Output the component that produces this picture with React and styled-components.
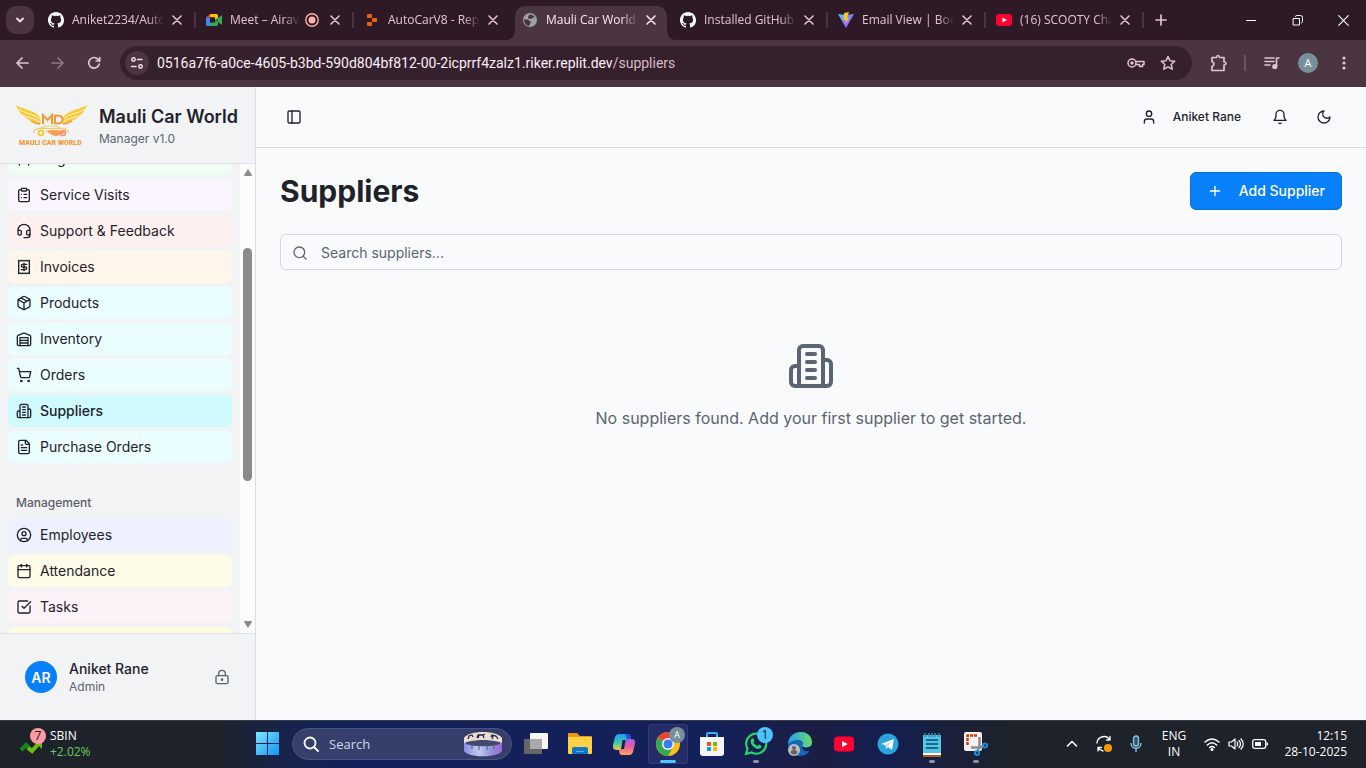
import React, { useLayoutEffect, useRef } from 'react';
import styled, { createGlobalStyle, css } from 'styled-components';
import {
  Calendar, CircleUser, ClipboardList, Headset, LockKeyhole, PanelLeft, Plus, Receipt, Search, ShoppingCart, User,
} from 'lucide-react';

const ui = '"Inter", "Liberation Sans", sans-serif';
const system = '"Open Sans", "Noto Sans", sans-serif';

const Global = createGlobalStyle`
  *, *::before, *::after { box-sizing: border-box; }
  body { margin: 0; font-family: ${ui}; color: #1e232b; }
  button, input { font: inherit; color: inherit; }
  button { border: 0; padding: 0; background: none; cursor: pointer; }
  a { color: inherit; text-decoration: none; }
  h1, h2, p { margin: 0; }
  svg { display: block; flex: none; }
`;

const Screen = styled.div`
  display: flex;
  flex-direction: column;
  height: 100vh;
  overflow: hidden;
`;

/* ---------- browser frame ---------- */

const TabStrip = styled.div`
  display: flex;
  align-items: center;
  height: 40px;
  flex: none;
  padding-left: 6px;
  background: #2d1a26;
  color: #e3c3d3;
  font: 12px/16px ${system};
`;

const TabMenuButton = styled.button`
  display: grid;
  place-items: center;
  width: 28px;
  height: 28px;
  flex: none;
  margin-right: 4px;
  border-radius: 10px;
  background: #4b3541;
  color: #f1dfe8;
`;

const Tab = styled.div`
  position: relative;
  display: flex;
  align-items: center;
  flex: 0 1 158px;
  min-width: 0;
  height: 34px;
  align-self: flex-end;
  padding: 0 11px 6px 10px;
  gap: 8px;
  ${(p) => p.$divider && css`
    &::after {
      content: '';
      position: absolute;
      right: 0;
      top: 6px;
      width: 2px;
      height: 16px;
      background: #4b3541;
    }
  `}
  ${(p) => p.$active && css`
    color: #f8e9f1;
    &::before {
      content: '';
      position: absolute;
      z-index: 0;
      inset: 0 3px;
      border-radius: 10px 10px 0 0;
      background: #4b3541;
    }
  `}
`;

const TabFlare = styled.svg`
  position: absolute;
  bottom: 0;
  ${(p) => (p.$side === 'left' ? 'left: -7px;' : 'right: -7px; transform: scaleX(-1);')}
`;

const TabIcon = styled.span`
  position: relative;
  flex: none;
  width: 16px;
  height: 16px;
`;

const TabTitle = styled.span`
  position: relative;
  flex: 1;
  min-width: 0;
  margin-right: -3px;
  white-space: nowrap;
  mask-image: linear-gradient(to right, #000 calc(100% - 16px), transparent);
`;

const TabClose = styled.button`
  position: relative;
  display: grid;
  place-items: center;
  width: 16px;
  height: 16px;
  flex: none;
`;

const NewTab = styled.button`
  display: grid;
  place-items: center;
  width: 28px;
  height: 28px;
  flex: none;
  margin-left: 3px;
`;

const WindowButtons = styled.div`
  display: flex;
  margin-left: auto;
  color: #fff;
`;

const WindowButton = styled.button`
  display: grid;
  place-items: center;
  width: 46px;
  height: 40px;
`;

const Toolbar = styled.div`
  position: relative;
  display: flex;
  align-items: center;
  gap: 8px;
  height: 47px;
  flex: none;
  padding: 0 8px 2px;
  background: #4b3541;
  color: #e3c3d3;
  font-family: ${system};
`;

const ToolButton = styled.button`
  display: grid;
  place-items: center;
  width: 28px;
  height: 28px;
  flex: none;
  opacity: ${(p) => (p.disabled ? 0.45 : 1)};
`;

const AddressBar = styled.div`
  display: flex;
  align-items: center;
  flex: 1;
  min-width: 0;
  height: 34px;
  margin: 0 4px;
  padding: 0 10px 0 5px;
  border-radius: 17px;
  background: #35212d;
`;

const SiteInfo = styled.button`
  display: grid;
  place-items: center;
  width: 24px;
  height: 24px;
  flex: none;
  margin-right: 8px;
  border-radius: 50%;
  background: #4b3541;
  color: #f1dfe8;
`;

const Url = styled.span`
  flex: 1;
  min-width: 0;
  overflow: hidden;
  white-space: nowrap;
  color: #fbeff5;
  font-family: Roboto, ${system};
  font-size: 14px;
  line-height: 20px;
  span { color: #d5b9c7; }
`;

const AddressButton = styled(ToolButton)`
  margin-left: 4px;
`;

const ToolDivider = styled.span`
  width: 2px;
  height: 16px;
  margin: 0 4px;
  background: #6a5260;
`;

const ProfileDot = styled.span`
  display: grid;
  place-items: center;
  width: 20px;
  height: 20px;
  border-radius: 50%;
  background: #78909c;
  color: #fff;
  font: 11px/20px ${system};
`;

/* ---------- application ---------- */

const AppFrame = styled.div`
  display: flex;
  flex: 1;
  min-height: 0;
  background: #f9fafc;
`;

const Sidebar = styled.aside`
  display: flex;
  flex-direction: column;
  width: 256px;
  flex: none;
  border-right: 1px solid #dcdee1;
  background: #f2f3f5;
`;

const Brand = styled.div`
  display: flex;
  align-items: center;
  gap: 12px;
  height: 77px;
  flex: none;
  padding: 0 16px;
  border-bottom: 1px solid #dfe1e4;
`;

const BrandName = styled.h2`
  font-size: 18px;
  line-height: 28px;
  font-weight: 600;
  white-space: nowrap;
`;

const Muted = styled.p`
  color: #5b6472;
  font-size: 12px;
  line-height: 16px;
`;

const NavArea = styled.div`
  display: flex;
  flex: 1;
  min-height: 0;
`;

const NavScroller = styled.nav`
  display: flex;
  flex-direction: column;
  gap: 24px;
  flex: 1;
  min-width: 0;
  overflow-y: scroll;
  scrollbar-width: none;
  padding: 0 8px;
`;

const NavGroup = styled.section`
  display: flex;
  flex-direction: column;
  gap: 4px;
`;

const NavHeading = styled.h2`
  height: 32px;
  margin-bottom: -4px;
  padding-left: 8px;
  color: #5b5f66;
  font-size: 12px;
  line-height: 32px;
  font-weight: 500;
`;

const NavItem = styled.a`
  display: flex;
  align-items: center;
  gap: 8px;
  height: 32px;
  flex: none;
  padding: 0 8px;
  border-radius: 6px;
  background: ${(p) => p.$tint};
  font-size: 14px;
  line-height: 20px;
  white-space: nowrap;
  &[aria-current] { font-weight: 500; }
`;

const ScrollRail = styled.div`
  display: flex;
  flex-direction: column;
  align-items: center;
  width: 15px;
  flex: none;
  padding: 4px 0;
  background: #fcfcfc;
`;

const ScrollTrack = styled.div`
  display: grid;
  grid-template-rows: 68fr 234fr 136fr;
  flex: 1;
  margin: 4px 0;
  &::before {
    content: '';
    grid-row: 2;
    width: 9px;
    border-radius: 5px;
    background: #8b8b8b;
  }
`;

const Account = styled.div`
  display: flex;
  align-items: center;
  gap: 12px;
  height: 87px;
  flex: none;
  padding: 0 25px;
  border-top: 1px solid #dfe1e4;
`;

const AccountText = styled.div`
  flex: 1;
`;

const AccountName = styled.p`
  font-size: 14px;
  line-height: 20px;
  font-weight: 500;
`;

const Initials = styled.span`
  display: grid;
  place-items: center;
  width: 32px;
  height: 32px;
  border-radius: 50%;
  background: #0880fa;
  color: #fff;
  font-size: 14px;
  font-weight: 600;
`;

const LockButton = styled.button`
  color: #5b6472;
`;

const Page = styled.div`
  display: flex;
  flex-direction: column;
  flex: 1;
  min-width: 0;
`;

const PageHeader = styled.header`
  display: flex;
  align-items: center;
  gap: 8px;
  height: 61px;
  flex: none;
  padding: 0 24px;
  border-bottom: 1px solid #dcdee2;
`;

const IconButton = styled.button`
  display: grid;
  place-items: center;
  width: ${(p) => (p.$narrow ? 28 : 36)}px;
  height: ${(p) => (p.$narrow ? 28 : 36)}px;
`;

const UserLink = styled.button`
  display: flex;
  align-items: center;
  gap: 16px;
  height: 32px;
  margin-left: auto;
  padding: 0 13px;
  font-size: 12px;
  line-height: 16px;
  font-weight: 500;
`;

const Content = styled.main`
  display: flex;
  flex-direction: column;
  gap: 24px;
  padding: 24px;
`;

const TitleRow = styled.div`
  display: flex;
  align-items: center;
  justify-content: space-between;
`;

const Title = styled.h1`
  font-size: 30px;
  line-height: 36px;
  font-weight: 700;
`;

const AddButton = styled.button`
  display: flex;
  align-items: center;
  gap: 16px;
  height: 38px;
  padding: 0 16px;
  border: 1px solid #0a70da;
  border-radius: 6px;
  background: #0880fa;
  color: #fff;
  font-size: 14px;
  line-height: 20px;
  font-weight: 500;
`;

const SearchField = styled.label`
  display: flex;
  align-items: center;
  gap: 13px;
  height: 36px;
  padding: 2px 11px 0;
  border: 1px solid #d5d8dd;
  border-radius: 6px;
  color: #5b6472;
`;

const SearchInput = styled.input`
  flex: 1;
  min-width: 0;
  padding: 0;
  border: 0;
  outline: 0;
  background: none;
  font-size: 14px;
  line-height: 20px;
  &::placeholder { color: #5b6472; opacity: 1; }
`;

const Empty = styled.div`
  display: flex;
  flex-direction: column;
  align-items: center;
  gap: 16px;
  padding: 48px 0;
  color: #5b6472;
  font-size: 16px;
  line-height: 24px;
`;

/* ---------- taskbar ---------- */

const Taskbar = styled.footer`
  display: flex;
  align-items: center;
  height: 48px;
  flex: none;
  padding-right: 19px;
  box-shadow: inset 0 1px #363b45;
  background: linear-gradient(90deg, #1d222b 0 16%, #16244c 21%, #14205a 26% 52%, #1b1e42 60%, #141f52 65%, #1a2138 70%, #1d222b 74%);
  color: #fff;
  font: 12px/16px ${system};
`;

const Stock = styled.button`
  display: flex;
  align-items: flex-start;
  gap: 4px;
  width: 246px;
  flex: none;
  padding-left: 20px;
  text-align: left;
  font-size: 12px;
  line-height: 16px;
`;

const StockChange = styled.span`
  display: block;
  color: #6ccb5f;
`;

const TaskButton = styled.button`
  position: relative;
  display: grid;
  place-items: center;
  width: 40px;
  height: 40px;
  flex: none;
  margin: 0 2px;
  border-radius: 4px;
  ${(p) => p.$active && css`
    background: #242b66;
    box-shadow: inset 0 0 0 1px #343a70;
  `}
  ${(p) => p.$open && css`
    &::after {
      content: '';
      position: absolute;
      bottom: 1px;
      width: ${p.$active ? 16 : 6}px;
      height: 3px;
      border-radius: 2px;
      background: ${p.$active ? '#4cc2ff' : '#8d93a5'};
    }
  `}
`;

const TaskSearch = styled.label`
  display: flex;
  align-items: center;
  gap: 10px;
  width: 220px;
  height: 32px;
  flex: none;
  margin: 0 2px;
  padding: 0 8px 0 10px;
  border: 1px solid #4a5384;
  border-radius: 16px;
  background: #363f6c;
`;

const TaskSearchInput = styled.input`
  flex: 1;
  min-width: 0;
  padding: 0;
  border: 0;
  outline: 0;
  background: none;
  font-size: 13px;
  line-height: 20px;
  &::placeholder { color: #d3d7e6; opacity: 1; }
`;

const Badge = styled.span`
  position: absolute;
  top: 3px;
  right: 3px;
  width: 16px;
  height: 16px;
  border-radius: 50%;
  background: ${(p) => p.$fill};
  color: ${(p) => p.$ink};
  font-size: ${(p) => (p.$ink === '#fff' ? 9 : 12)}px;
  line-height: 16px;
  text-align: center;
`;

const Tray = styled.div`
  display: flex;
  align-items: center;
  margin-left: auto;
`;

const TrayButton = styled.button`
  display: grid;
  place-items: center;
  width: 32px;
  height: 40px;
`;

const TrayStatus = styled.button`
  display: flex;
  align-items: center;
  gap: 8px;
  width: 64px;
  margin-right: 16px;
`;

const Language = styled.button`
  width: 44px;
  margin-right: 8px;
  font-size: 12px;
  line-height: 16px;
  text-align: center;
`;

const Clock = styled.time`
  display: block;
  width: 63px;
  font-size: 12px;
  line-height: 16px;
  text-align: right;
  white-space: nowrap;
`;

/* ---------- icons ---------- */

function Stroke({ d, size = 16, width = 2, box = 24, children }) {
  return (
    <svg width={size} height={size} viewBox={`0 0 ${box} ${box}`} fill="none" stroke="currentColor" strokeWidth={width} strokeLinecap="round" strokeLinejoin="round" aria-hidden="true">
      {d && <path d={d} />}
      {children}
    </svg>
  );
}

const Building = ({ size }) => (
  <Stroke size={size} d="M6 22V4a2 2 0 0 1 2-2h8a2 2 0 0 1 2 2v18Z M6 12H4a2 2 0 0 0-2 2v6a2 2 0 0 0 2 2h2 M18 9h2a2 2 0 0 1 2 2v9a2 2 0 0 1-2 2h-2 M10 6h4 M10 10h4 M10 14h4 M10 18h4" />
);
const Box = () => (
  <Stroke d="M7.5 4.27l9 5.15 M21 8a2 2 0 0 0-1-1.73l-7-4a2 2 0 0 0-2 0l-7 4A2 2 0 0 0 3 8v8a2 2 0 0 0 1 1.73l7 4a2 2 0 0 0 2 0l7-4A2 2 0 0 0 21 16Z M3.3 7l8.7 5 8.7-5 M12 22V12" />
);
const Depot = () => (
  <Stroke d="M22 8.35V20a2 2 0 0 1-2 2H4a2 2 0 0 1-2-2V8.35A2 2 0 0 1 3.26 6.5l8-3.2a2 2 0 0 1 1.48 0l8 3.2A2 2 0 0 1 22 8.35Z M6 18h12 M6 14h12 M6 10h12v12H6z" />
);
const Doc = () => (
  <Stroke d="M15 2H6a2 2 0 0 0-2 2v16a2 2 0 0 0 2 2h12a2 2 0 0 0 2-2V7Z M14 2v4a2 2 0 0 0 2 2h4 M10 9H8 M16 13H8 M16 17H8" />
);
const Check = () => (
  <Stroke d="M21 10.5V19a2 2 0 0 1-2 2H5a2 2 0 0 1-2-2V5a2 2 0 0 1 2-2h12.5 M9 11l3 3L22 4" />
);
const BellIcon = () => (
  <Stroke d="M6 8a6 6 0 0 1 12 0c0 7 3 9 3 9H3s3-2 3-9 M10.3 21a1.94 1.94 0 0 0 3.4 0" />
);
const MoonIcon = () => <Stroke d="M12 3a6 6 0 0 0 9 9 9 9 0 1 1-9-9Z" />;

const CloseIcon = () => <Stroke size={10} box={10} width={1.6} d="M1 1l8 8M9 1L1 9" />;

const GitHubIcon = () => (
  <svg width="16" height="16" viewBox="0 0 16 16" fill="#fff"><path d="M8 0C3.58 0 0 3.58 0 8c0 3.54 2.29 6.53 5.47 7.59.4.07.55-.17.55-.38 0-.19-.01-.82-.01-1.49-2.01.37-2.53-.49-2.69-.94-.09-.23-.48-.94-.82-1.13-.28-.15-.68-.52-.01-.53.63-.01 1.08.58 1.23.82.72 1.21 1.87.87 2.33.66.07-.52.28-.87.51-1.07-1.78-.2-3.64-.89-3.64-3.95 0-.87.31-1.59.82-2.15-.08-.2-.36-1.02.08-2.12 0 0 .67-.21 2.2.82.64-.18 1.32-.27 2-.27s1.36.09 2 .27c1.53-1.04 2.2-.82 2.2-.82.44 1.1.16 1.92.08 2.12.51.56.82 1.27.82 2.15 0 3.07-1.87 3.75-3.65 3.95.29.25.54.73.54 1.48 0 1.07-.01 1.93-.01 2.2 0 .21.15.46.55.38A8.01 8.01 0 0 0 16 8c0-4.42-3.58-8-8-8z" /></svg>
);
const MeetIcon = () => (
  <svg width="16" height="16" viewBox="0 0 16 16">
    <path fill="#34a853" d="M3 9h8V7l4-3.300q1-.7 1 .3v8q0 1-1 .3L12 10v2.500q0 1.500-1.500 1.500H3z" />
    <path fill="#fbbc04" d="M4 2h6.500Q12 2 12 3.500V8H9V5.500H4z" />
    <path fill="#ea4335" d="M4 2v3.500H0z" />
    <path fill="#4285f4" d="M0 5.500h4V14H1.500Q0 14 0 12.500z" />
    <path fill="#188038" d="M12 6v4L9 8z" />
    <path fill="#2d1a26" d="M4 5.500h5v5H4z" />
  </svg>
);
const ReplitIcon = () => (
  <svg width="16" height="16" viewBox="0 0 16 16" fill="#f26207"><rect x="3" y="2" width="5" height="4" rx="1" /><rect x="8" y="6" width="5" height="4" rx="1" /><rect x="3" y="10" width="5" height="4" rx="1" /></svg>
);
const GlobeIcon = () => (
  <svg width="16" height="16" viewBox="0 0 16 16"><circle cx="8" cy="8" r="7" fill="#9aa0a6" /><path fill="#4b3541" d="M2 7.500c3-.5 4.500.5 5.500 1.500 1 .2 1.500.8 1 2l-1.500 3C4 13.500 2 11 2 7.500zM8 2.500c2 0 4 1 4.500 2.500-1 0-1 1-2 1s-1 1.500-2 1-2.500 0-2.500-1.500S7 3 8 2.500z" /></svg>
);
const ViteIcon = () => (
  <svg width="16" height="16" viewBox="0 0 16 16"><defs><linearGradient id="vite" x1="0" y1="0" x2="1" y2="1"><stop stopColor="#41d1ff" /><stop offset="1" stopColor="#bd34fe" /></linearGradient></defs><path fill="url(#vite)" d="M0 2l8 1 8-1-8 14z" /><path fill="#ffc61e" d="M11 0L6 1 5.500 8H8l-.7 4 4-6H9z" /></svg>
);
const YouTubeIcon = ({ size = 16 }) => (
  <svg width={size} height={size} viewBox="0 0 16 16"><rect y="2" width="16" height="12" rx="3" fill="#ff0033" /><path fill="#fff" d="M6.500 5.500v5L11 8z" /></svg>
);
const RecordIcon = () => (
  <svg width="14" height="14" viewBox="0 0 14 14"><circle cx="7" cy="7" r="6.200" fill="none" stroke="#ffb4ab" strokeWidth="1.400" /><circle cx="7" cy="7" r="3.500" fill="#ffb4ab" /></svg>
);

const Logo = () => (
  <svg width="71" height="44" viewBox="0 0 71 44" role="img" aria-label="Mauli Car World">
    <g fill="#fccb2e">
      <path d="M0 2c8 5 20 5 24 13l1 6C13 19 3 12 0 2z" /><path d="M71 2c-8 5-20 5-24 13l-1 6C58 19 68 12 71 2z" />
    </g>
    <g fill="none" stroke="#f2f3f5" strokeWidth="1"><path d="M2 6c8 5 17 5 21 10M6 12c6 3 13 3 18 7M69 6c-8 5-17 5-21 10M65 12c-6 3-13 3-18 7" /></g>
    <path fill="none" stroke="#f5923e" strokeWidth="1.300" d="M15 18c4 3 6 3 9 3M56 18c-4 3-6 3-9 3" />
    <path fill="none" stroke="#f59a35" strokeWidth="2" d="M27 21v-9l4.500 5 4.500-5v9M39 12.500h3c6 0 6 8 0 8h-3z" />
    <path fill="none" stroke="#fcc85a" strokeWidth="1.200" d="M18 30c-1-4 4-4 7-5 5-3 14-3 19 0 4 0 8 1 9 5M23 25.500h24" />
    <path fill="#f5a04e" d="M30 28c8-2 14 0 20 0-3 4-8 5-11 5-4-1-6-3-9-5z" />
    <g fill="none" strokeWidth="1.500"><circle cx="25" cy="30" r="2.500" stroke="#fcc419" /><circle cx="47" cy="30" r="2.500" stroke="#f59078" /></g>
    <text x="3" y="42" fill="#f59a35" fontFamily="Roboto, sans-serif" fontWeight="900" fontSize="7">MAULI CAR WORLD</text>
  </svg>
);

const WindowsIcon = () => (
  <svg width="24" height="24" viewBox="0 0 24 24"><defs><linearGradient id="win" x1="0" y1="0" x2="1" y2="1"><stop stopColor="#7ce5ff" /><stop offset="1" stopColor="#1394f5" /></linearGradient></defs><path fill="url(#win)" d="M0 0h11v11H0zM12 0h11v11H12zM0 12h11v11H0zM12 12h11v11H12z" /></svg>
);
const CarouselArt = () => (
  <svg width="40" height="26" viewBox="0 0 40 26"><defs><linearGradient id="drum" x1="0" x2="1"><stop stopColor="#8a8fe0" /><stop offset=".4" stopColor="#c3c9f2" /><stop offset=".7" stopColor="#8f93dc" /><stop offset="1" stopColor="#a067cf" /></linearGradient></defs><path fill="url(#drum)" d="M1 8v12c4 7 34 7 38 0V8z" /><path fill="#3f4a6e" d="M3 11c8-3 26-3 34 0v2c-8 3-26 3-34 0z" /><path fill="#f0dcd2" d="M1 7C6-1 34-1 39 7v5C30 8 10 8 1 12z" /><path fill="none" stroke="#202a51" strokeWidth="1.300" d="M5 8l1-3 3-1 1 2M14 7l1-3h5l2-1M16 4l-1 3M20 4l1 3M28 6l1-2 4 1 2 3M30 5l-1 3" /><path stroke="#4b5782" d="M9 13v5M16 14v5M24 14v5M31 13v5" /></svg>
);
const TaskViewIcon = () => (
  <svg width="24" height="24" viewBox="0 0 24 24"><rect x="6" y="1" width="18" height="16" rx="1" fill="#f5f5f5" /><rect y="7" width="18" height="15" rx="1" fill="#666" /><path fill="#aaa" d="M6 7h12v10H6z" /></svg>
);
const FolderIcon = () => (
  <svg width="24" height="24" viewBox="0 0 24 24"><path fill="#e39a10" d="M0 2q0-1 1-1h8l3 3h11q1 0 1 1v4H0z" /><rect y="5" width="24" height="17" rx="1" fill="#ffcf48" /><path fill="#0f78c5" d="M4 22v-5q0-2 2-2h12q2 0 2 2v5z" /><path fill="#4cb0ea" d="M8 19h8v1H8z" /></svg>
);
const CopilotIcon = () => (
  <svg width="24" height="24" viewBox="0 0 24 24"><defs><linearGradient id="cpa" x1="0" y1="0" x2="0" y2="1"><stop stopColor="#1e9df2" /><stop offset=".5" stopColor="#36c5b2" /><stop offset="1" stopColor="#e7cf3b" /></linearGradient><linearGradient id="cpb" x1="0" y1="0" x2="0" y2="1"><stop stopColor="#a55cf0" /><stop offset=".5" stopColor="#ee5c95" /><stop offset="1" stopColor="#ffa85c" /></linearGradient></defs><path fill="url(#cpa)" d="M7 2h9q2 0 3 5h-2q-3 0-4 3l-2 5q-1 3-4 3H5q-5 0-4-5l2-8q1-3 4-3z" /><path fill="#2153dc" d="M13 2h3q2 0 3 5h-3q-2 0-2-3z" /><path fill="url(#cpb)" d="M17 7h2q5 0 4 5l-2 8q-1 3-4 3h-7q-3 0-3-5 3 0 4-3l2-5q1-3 4-3z" /><path fill="#141f56" d="M10.500 8h3l-1.500 9h-3z" /></svg>
);
const ChromeIcon = () => (
  <svg width="24" height="24" viewBox="0 0 24 24"><circle cx="12" cy="12" r="12" fill="#fbc116" /><path fill="#ea4335" d="M12 12L1.600 6A12 12 0 0 1 22.400 6z" /><path fill="#34a853" d="M12 12L1.600 6A12 12 0 0 0 12 24l5.200-9z" /><circle cx="12" cy="12" r="6" fill="#fff" /><circle cx="12" cy="12" r="4.600" fill="#397cf1" /></svg>
);
const StoreIcon = () => (
  <svg width="24" height="24" viewBox="0 0 24 24"><path fill="none" stroke="#35b4ed" strokeWidth="2" d="M7 6V2q0-1 1-1h8q1 0 1 1v4" /><path fill="#f4f4f5" d="M0 5h24v16q0 3-3 3H3q-3 0-3-3z" /><path fill="#f25022" d="M7 10h4v4H7z" /><path fill="#7fba00" d="M13 10h4v4h-4z" /><path fill="#00a4ef" d="M7 15h4v4H7z" /><path fill="#ffb900" d="M13 15h4v4h-4z" /></svg>
);
const WhatsAppIcon = () => (
  <svg width="24" height="24" viewBox="0 0 24 24"><path fill="none" stroke="#25d366" strokeWidth="2.200" d="M2 22l1.500-5.400a10 10 0 1 1 4 3.900z" /><path fill="#25d366" d="M8 6.500c.6-.6 1.300-.4 1.500.2l.9 2-.9 1.500c.8 1.600 2.200 2.900 4 3.700l1.400-1.300 2.400 1.200c.5 1.800-1.300 3.200-3 3.100-4.100-.4-7.500-4-7.600-7.700 0-1.200.5-2.200 1.300-2.700z" /></svg>
);
const EdgeIcon = () => (
  <svg width="24" height="24" viewBox="0 0 24 24"><defs><linearGradient id="edge" x1="0" x2="1"><stop stopColor="#259ef2" /><stop offset="1" stopColor="#69db66" /></linearGradient></defs><circle cx="12" cy="12" r="12" fill="#1468b7" /><path fill="url(#edge)" d="M0 12C1-3 23-4 24 10c0 5-6 7-10 4 3-3 0-6-4-6-5 0-8 2-10 4z" /><path fill="#141f52" d="M14 14c3 2.500 7 2 10-.5V18l-1 1c-5 1-9 0-9-5z" /><circle cx="6" cy="18" r="6" fill="#bfbfbf" /><circle cx="6" cy="16" r="2" fill="#616161" /><path fill="#616161" d="M2.500 21q0-3 3.500-3t3.500 3q-3 3-7 0z" /></svg>
);
const TelegramIcon = () => (
  <svg width="22" height="22" viewBox="0 0 22 22"><circle cx="11" cy="11" r="10.500" fill="#29a4dc" /><path fill="#fff" d="M4 11l13-5-2 11-4-3-2 2-.5-4z" /><path fill="#b9dff1" d="M8.500 12L15 8l-5 6-1 2z" /></svg>
);
const NotepadIcon = () => (
  <svg width="20" height="25" viewBox="0 0 20 25"><path fill="#55c3e4" d="M1 3h18v19H1z" /><path fill="#ad5a1d" d="M1 22h18v3H1z" /><path fill="#fff" d="M1 21h18v2H1z" /><path stroke="#176b8e" strokeWidth="2" d="M4 8h12M4 12h12M4 16h12" /><path stroke="#2c8fb0" strokeWidth="1.500" d="M3 1v4M7 1v4M10 1v4M13 1v4M17 1v4" /></svg>
);
const SnipIcon = () => (
  <svg width="26" height="25" viewBox="0 0 26 25"><rect x="1" width="18" height="19" rx="2" fill="#f2f2f2" /><path fill="none" stroke="#d83b01" strokeWidth="2.500" strokeDasharray="3 1" d="M4.500 13V3.500H14" /><path fill="none" stroke="#8c8c8c" strokeWidth="2.500" d="M16.500 5v10l-2 4M8 15.500h9l3-1" /><circle cx="22" cy="13.500" r="2" fill="none" stroke="#1b8de0" strokeWidth="2" /><circle cx="14" cy="21" r="2" fill="none" stroke="#1b8de0" strokeWidth="2" /></svg>
);
const StockIcon = () => (
  <svg width="26" height="28" viewBox="0 0 26 28"><path fill="none" stroke="#168c18" strokeWidth="4" d="M1 22l5-5 5 5" /><path fill="none" stroke="#6cbf10" strokeWidth="4" d="M8 20l4 3 8-9" /><path fill="#6cbf10" d="M13 12h9v9z" /><circle cx="18" cy="8" r="8" fill="#ff99a4" /><text x="18" y="12" textAnchor="middle" fill="#111" fontSize="12">7</text></svg>
);

/* ---------- data ---------- */

const tabs = [
  { title: 'Aniket2234/Auto', icon: <GitHubIcon />, divider: true },
  { title: 'Meet – Airav', icon: <MeetIcon />, divider: true, recording: true },
  { title: 'AutoCarV8 - Rep', icon: <ReplitIcon /> },
  { title: 'Mauli Car World', icon: <GlobeIcon />, active: true },
  { title: 'Installed GitHub', icon: <GitHubIcon />, divider: true },
  { title: 'Email View | Boo', icon: <ViteIcon />, divider: true },
  { title: '(16) SCOOTY Cha', icon: <YouTubeIcon />, divider: true },
];

const services = [
  { label: 'Registration Dashboard', icon: <User size={16} />, tint: '#f0fdf4' },
  { label: 'Service Visits', icon: <ClipboardList size={16} />, tint: '#faf5ff' },
  { label: 'Support & Feedback', icon: <Headset size={16} />, tint: '#fff0f0' },
  { label: 'Invoices', icon: <Receipt size={16} />, tint: '#fff5eb' },
  { label: 'Products', icon: <Box />, tint: '#ebfeff' },
  { label: 'Inventory', icon: <Depot />, tint: '#ebfeff' },
  { label: 'Orders', icon: <ShoppingCart size={16} />, tint: '#ebfeff' },
  { label: 'Suppliers', icon: <Building size={16} />, tint: '#cffafe', current: true },
  { label: 'Purchase Orders', icon: <Doc />, tint: '#ebfeff' },
];

const management = [
  { label: 'Employees', icon: <CircleUser size={16} />, tint: '#edf1ff' },
  { label: 'Attendance', icon: <Calendar size={16} />, tint: '#fefbe8' },
  { label: 'Tasks', icon: <Check />, tint: '#fdf2f8' },
  { label: '', icon: null, tint: '#fefce0' },
];

const apps = [
  { name: 'Task View', icon: <TaskViewIcon /> },
  { name: 'File Explorer', icon: <FolderIcon /> },
  { name: 'Copilot', icon: <CopilotIcon /> },
  { name: 'Chrome', icon: <ChromeIcon />, open: true, active: true, badge: ['A', '#78909c', '#fff'] },
  { name: 'Store', icon: <StoreIcon /> },
  { name: 'WhatsApp', icon: <WhatsAppIcon />, open: true, badge: ['1', '#4cc2ff', '#0c1a2e'] },
  { name: 'Edge', icon: <EdgeIcon /> },
  { name: 'YouTube', icon: <YouTubeIcon size={20} /> },
  { name: 'Telegram', icon: <TelegramIcon /> },
  { name: 'Notepad', icon: <NotepadIcon />, open: true },
  { name: 'Snipping Tool', icon: <SnipIcon />, open: true },
];

const NavList = ({ items }) => items.map((item, i) => (
  <NavItem key={i} href="#" $tint={item.tint} aria-current={item.current ? 'page' : undefined}>
    {item.icon}
    {item.label}
  </NavItem>
));

const Flare = ({ side }) => (
  <TabFlare $side={side} width="10" height="10" viewBox="0 0 10 10"><path fill="#4b3541" d="M10 0v10H0Q10 10 10 0z" /></TabFlare>
);

function BrowserFrame() {
  return (
    <>
      <TabStrip>
        <TabMenuButton aria-label="Search tabs"><Stroke size={10} box={10} width={1.8} d="M2 3.500l3 3 3-3" /></TabMenuButton>
        {tabs.map((tab) => (
          <Tab key={tab.title} $active={tab.active} $divider={tab.divider}>
            {tab.active && <><Flare side="left" /><Flare side="right" /></>}
            <TabIcon>{tab.icon}</TabIcon>
            <TabTitle>{tab.title}</TabTitle>
            {tab.recording && <RecordIcon />}
            <TabClose aria-label="Close tab"><CloseIcon /></TabClose>
          </Tab>
        ))}
        <NewTab aria-label="New tab"><Stroke size={12} box={12} width={1.7} d="M6 1v10M1 6h10" /></NewTab>
        <WindowButtons>
          <WindowButton aria-label="Minimize"><Stroke size={10} box={10} width={1} d="M0 5.500h10" /></WindowButton>
          <WindowButton aria-label="Restore"><Stroke size={11} box={11} width={1} d="M1.500 3.500h6v6.500h-6zM3.500 1.500q0-1 1-1h4q2 0 2 2v4q0 1-1 1.500" /></WindowButton>
          <WindowButton aria-label="Close"><Stroke size={11} box={11} width={1.100} d="M.7.7l9.600 9.600M10.300.7L.7 10.300" /></WindowButton>
        </WindowButtons>
      </TabStrip>
      <Toolbar>
        <ToolButton aria-label="Back"><Stroke size={14} box={14} width={1.700} d="M13 7H2M7 2L2 7l5 5" /></ToolButton>
        <ToolButton aria-label="Forward" disabled><Stroke size={14} box={14} width={1.700} d="M1 7h11M7 2l5 5-5 5" /></ToolButton>
        <ToolButton aria-label="Reload"><Stroke size={14} box={14} width={1.700} d="M12.200 8A5.300 5.300 0 1 1 11 3.300L12.500 5M12.700 1.500V5H9.200" /></ToolButton>
        <AddressBar>
          <SiteInfo aria-label="Site information"><Stroke size={14} box={14} width={1.500} d="M7.500 3.500H12M1.500 10.500H6"><circle cx="3.500" cy="3.500" r="1.700" /><circle cx="10.500" cy="10.500" r="1.700" /></Stroke></SiteInfo>
          <Url>0516a7f6-a0ce-4605-b3bd-590d804bf812-00-2icprrf4zalz1.riker.replit.dev<span>/suppliers</span></Url>
          <AddressButton aria-label="Passwords"><Stroke size={18} box={18} width={1.500} d="M9 7.500h8v3h-1.500v2h-3v-2H9"><circle cx="5" cy="9" r="4" /><circle cx="5" cy="9" r="1" fill="currentColor" /></Stroke></AddressButton>
          <AddressButton aria-label="Bookmark"><Stroke size={16} box={16} width={1.500} d="M8 1.500l2 4.300 4.700.5-3.500 3.200 1 4.700L8 11.800l-4.200 2.400 1-4.700L1.300 6.300 6 5.800z" /></AddressButton>
        </AddressBar>
        <ToolButton aria-label="Extensions"><Stroke size={18} box={18} width={1.700} d="M3 3.500h4.500q.2-2 1.500-2t1.500 2H15V8q2 .2 2 1.500T15 11v5.500H3v-4.200q2-.5 2-2.300T3 7.700z" /></ToolButton>
        <ToolDivider />
        <ToolButton aria-label="Media"><Stroke size={16} box={16} width={1.600} d="M1 3h9M1 6.500h9M1 10h5M12.500 11V3H15"><circle cx="10.800" cy="11.500" r="1.800" fill="currentColor" /></Stroke></ToolButton>
        <ToolButton aria-label="Profile"><ProfileDot>A</ProfileDot></ToolButton>
        <ToolButton aria-label="Menu"><svg width="4" height="16" viewBox="0 0 4 16" fill="currentColor"><circle cx="2" cy="3" r="1.600" /><circle cx="2" cy="8" r="1.600" /><circle cx="2" cy="13" r="1.600" /></svg></ToolButton>
      </Toolbar>
    </>
  );
}

function AppSidebar() {
  const scroller = useRef(null);
  useLayoutEffect(() => {
    scroller.current.scrollTop = 21;
  }, []);
  return (
    <Sidebar>
      <Brand>
        <Logo />
        <div>
          <BrandName>Mauli Car World</BrandName>
          <Muted>Manager v1.0</Muted>
        </div>
      </Brand>
      <NavArea>
        <NavScroller ref={scroller}>
          <NavGroup><NavList items={services} /></NavGroup>
          <NavGroup>
            <NavHeading>Management</NavHeading>
            <NavList items={management} />
          </NavGroup>
        </NavScroller>
        <ScrollRail aria-hidden="true">
          <svg width="10" height="8" viewBox="0 0 10 8" fill="#8b8b8b"><path d="M5 1l4 6q0 1-1 1H2Q1 8 1 7z" /></svg>
          <ScrollTrack />
          <svg width="10" height="8" viewBox="0 0 10 8" fill="#8b8b8b"><path d="M5 7L1 1q0-1 1-1h6q1 0 1 1z" /></svg>
        </ScrollRail>
      </NavArea>
      <Account>
        <Initials>AR</Initials>
        <AccountText>
          <AccountName>Aniket Rane</AccountName>
          <Muted>Admin</Muted>
        </AccountText>
        <LockButton aria-label="Lock"><LockKeyhole size={16} /></LockButton>
      </Account>
    </Sidebar>
  );
}

function SystemTaskbar() {
  return (
    <Taskbar>
      <Stock>
        <StockIcon />
        <span>SBIN<StockChange>+2.02%</StockChange></span>
      </Stock>
      <TaskButton aria-label="Start"><WindowsIcon /></TaskButton>
      <TaskSearch>
        <Stroke size={16} box={16} width={1.800} d="M11 11l4 4"><circle cx="7" cy="7" r="5.500" /></Stroke>
        <TaskSearchInput placeholder="Search" aria-label="Search" />
        <CarouselArt />
      </TaskSearch>
      {apps.map((app) => (
        <TaskButton key={app.name} aria-label={app.name} $open={app.open} $active={app.active}>
          {app.icon}
          {app.badge && <Badge $fill={app.badge[1]} $ink={app.badge[2]}>{app.badge[0]}</Badge>}
        </TaskButton>
      ))}
      <Tray>
        <TrayButton aria-label="Hidden icons"><Stroke size={12} box={12} width={1.600} d="M1.500 8L6 3.500 10.500 8" /></TrayButton>
        <TrayButton aria-label="Updates"><Stroke size={18} box={18} width={1.300} d="M2 8a7 7 0 0 1 13-3V1.500M15 5h-3.500M3 16v-3.500h3.500M3 12.500a7 7 0 0 0 5 3.500"><circle cx="13" cy="13" r="4" fill="#ff9800" stroke="none" /></Stroke></TrayButton>
        <TrayButton aria-label="Microphone"><svg width="16" height="18" viewBox="0 0 16 18" fill="none" stroke="#7fc4dc" strokeWidth="1.400"><rect x="5.500" y="1" width="5" height="10" rx="2.500" fill="#33596b" /><path d="M3 8c0 7 10 7 10 0M8 13.500V17" /></svg></TrayButton>
        <Language>ENG<br />IN</Language>
        <TrayStatus aria-label="Network, volume, battery">
          <Stroke size={16} box={16} width={1.500} d="M1 6q7-6 14 0M3.300 9q4.700-4.500 9.400 0M5.700 11.500q2.300-2 4.600 0"><circle cx="8" cy="13.500" r=".8" fill="currentColor" /></Stroke>
          <Stroke size={16} box={16} width={1.200} d="M1 6h2.500L7 3v10L3.500 10H1zM9 6q1.500 2 0 4M11 4.500q3 3.500 0 7M13 3q4.500 5 0 10" />
          <svg width="16" height="12" viewBox="0 0 16 12" fill="none" stroke="#fff"><rect x=".7" y="1.700" width="13" height="8.600" rx="2" strokeWidth="1.300" /><path fill="#fff" stroke="none" d="M3 4h6v4H3z" /><path strokeWidth="1.500" d="M15.200 4.500v3" /></svg>
        </TrayStatus>
        <Clock>12:15<br />28-10-2025</Clock>
      </Tray>
    </Taskbar>
  );
}

export default function App() {
  return (
    <Screen>
      <Global />
      <BrowserFrame />
      <AppFrame>
        <AppSidebar />
        <Page>
          <PageHeader>
            <IconButton $narrow aria-label="Toggle sidebar"><PanelLeft size={16} /></IconButton>
            <UserLink><User size={16} />Aniket Rane</UserLink>
            <IconButton aria-label="Notifications"><BellIcon /></IconButton>
            <IconButton aria-label="Dark mode"><MoonIcon /></IconButton>
          </PageHeader>
          <Content>
            <TitleRow>
              <Title>Suppliers</Title>
              <AddButton><Plus size={16} />Add Supplier</AddButton>
            </TitleRow>
            <SearchField>
              <Search size={16} />
              <SearchInput type="search" placeholder="Search suppliers..." aria-label="Search suppliers" />
            </SearchField>
            <Empty>
              <Building size={48} />
              <p>No suppliers found. Add your first supplier to get started.</p>
            </Empty>
          </Content>
        </Page>
      </AppFrame>
      <SystemTaskbar />
    </Screen>
  );
}
